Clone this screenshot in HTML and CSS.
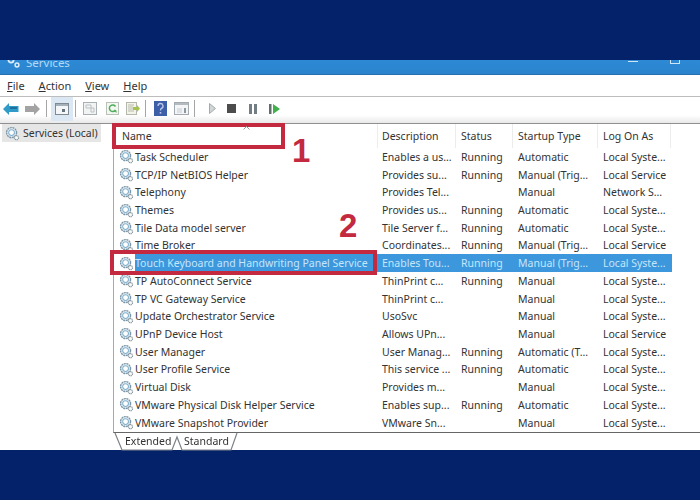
FILE: index.html
```html
<!DOCTYPE html>
<html lang="en">
<head>
<meta charset="utf-8">
<title>Services</title>
<link rel="stylesheet" href="styles.css">
</head>
<body>
<svg class="defs" width="0" height="0" aria-hidden="true">
  <symbol id="gear" viewBox="0 0 16 16">
    <circle cx="7" cy="7" r="5.300" fill="#f1f6f9" stroke="#7d97a8" stroke-width="1.500" stroke-dasharray="2.200 .6"/>
    <circle cx="7" cy="7" r="3.100" fill="#fff" stroke="#7fb0cf" stroke-width="1.100"/>
    <circle cx="12.200" cy="12.500" r="2.300" fill="#eef2f3" stroke="#84949c" stroke-width="1.100" stroke-dasharray="1.300 .5"/>
    <circle cx="12.200" cy="12.500" r=".8" fill="#fff"/>
  </symbol>
</svg>
<main class="window">
  <header class="titlebar">
    <svg class="title-icon" width="13" height="12" viewBox="0 0 13 12"><circle cx="4" cy="3" r="2.600" fill="none" stroke="#dcecf8" stroke-width="1.800"/><circle cx="10" cy="8" r="1.900" fill="none" stroke="#dcecf8" stroke-width="1.500"/></svg>
    <span class="title-text">Services</span>
    <span class="win-min"></span>
    <span class="win-max"></span>
  </header>
  <nav class="menubar">
    <span><u>F</u>ile</span><span><u>A</u>ction</span><span><u>V</u>iew</span><span><u>H</u>elp</span>
  </nav>
  <div class="toolbar">
    <svg class="t-back" width="16" height="12" viewBox="0 0 16 12"><path d="M0 6 6 0v3h9.500v6H6v3z" fill="#2f9bc9"/><path d="M7 4h7v2H7z" fill="#1d6f9c"/></svg>
    <svg class="t-fwd" width="15" height="12" viewBox="0 0 15 12"><path d="M15 6 9 0v3H0v6h9v3z" fill="#a3a3a3"/></svg>
    <i class="sep s1"></i>
    <span class="t-active"><svg width="14" height="12" viewBox="0 0 14 12"><rect x=".5" y=".5" width="13" height="11" fill="#f4f6f8" stroke="#7e8a94"/><path d="M1 1h12v2H1z" fill="#a4b0ba"/><path d="M7 6h3v3H7z" fill="#66727c"/></svg></span>
    <i class="sep s2"></i>
    <svg class="t-a" width="14" height="13" viewBox="0 0 14 13"><rect x=".5" y=".5" width="13" height="12" fill="#f2f3f3" stroke="#a9b0b4"/><path d="M3 3h5v3H3zM8 6h3v4H8z" fill="none" stroke="#bcc1c4"/></svg>
    <svg class="t-b" width="13" height="13" viewBox="0 0 13 13"><rect x=".5" y=".5" width="12" height="12" fill="#f3f6f1" stroke="#b9c2b6"/><path d="M9.500 8A3.300 3.300 0 1 1 9.500 4.500" fill="none" stroke="#4fae5b" stroke-width="1.500"/><path d="M7.500 8.500h3v2.500z" fill="#4fae5b"/></svg>
    <svg class="t-c" width="14" height="13" viewBox="0 0 14 13"><rect x=".5" y=".5" width="10" height="12" fill="#f3f3e9" stroke="#b4b8ab"/><path d="M2 3h6M2 5h5M2 7h5M2 9h6" stroke="#b7bbad"/><path d="M7 5h4V3l3 3.500L11 10V8H7z" fill="#a5c24d"/></svg>
    <i class="sep s3"></i>
    <svg class="t-help" width="13" height="15" viewBox="0 0 13 15"><rect width="13" height="15" fill="#3d5fa8"/><path d="M4 5a2.500 2.500 0 1 1 3.500 2.300C6.700 7.800 6.500 8.200 6.500 9.500" fill="none" stroke="#b9c8ea" stroke-width="1.400"/><rect x="5.700" y="11" width="1.600" height="1.600" fill="#b9c8ea"/></svg>
    <svg class="t-d" width="15" height="13" viewBox="0 0 15 13"><rect x=".5" y=".5" width="14" height="12" fill="#f4f5f6" stroke="#a3abb1"/><path d="M1 1h13v2H1z" fill="#b3bbc1"/><path d="M3 6h5v5H3z" fill="#dde1e5"/><path d="M10 6h2v5h-2z" fill="#8e98a0"/></svg>
    <i class="sep s4"></i>
    <svg class="t-play" width="7" height="11" viewBox="0 0 7 11"><path d="M.5.500 6.500 5.500.5 10.500z" fill="#cfd6d5" stroke="#a3acab"/></svg>
    <span class="t-stop"></span>
    <svg class="t-pause" width="8" height="10" viewBox="0 0 8 10"><path d="M0 0h3v10H0zM5 0h3v10H5z" fill="#727e84"/></svg>
    <svg class="t-resume" width="11" height="10" viewBox="0 0 11 10"><path d="M0 0h2.500v10H0z" fill="#5f6e68"/><path d="M4 0l7 5-7 5z" fill="#3fb04a"/></svg>
  </div>
  <div class="content">
    <aside class="tree">
      <div class="tree-item"><svg class="tree-icon" width="15" height="15"><use href="#gear"/></svg>Services (Local)</div>
    </aside>
    <section class="panel">
      <div class="list">
        <div class="row head"><span class="name-head">Name</span><span>Description</span><span>Status</span><span>Startup Type</span><span>Log On As</span></div>
        <div class="row"><span class="name"><svg class="gear" width="15" height="15"><use href="#gear"/></svg>Task Scheduler</span><span>Enables a us...</span><span>Running</span><span>Automatic</span><span>Local Syste...</span></div>
        <div class="row"><span class="name"><svg class="gear" width="15" height="15"><use href="#gear"/></svg>TCP/IP NetBIOS Helper</span><span>Provides su...</span><span>Running</span><span>Manual (Trig...</span><span>Local Service</span></div>
        <div class="row"><span class="name"><svg class="gear" width="15" height="15"><use href="#gear"/></svg>Telephony</span><span>Provides Tel...</span><span></span><span>Manual</span><span>Network S...</span></div>
        <div class="row"><span class="name"><svg class="gear" width="15" height="15"><use href="#gear"/></svg>Themes</span><span>Provides us...</span><span>Running</span><span>Automatic</span><span>Local Syste...</span></div>
        <div class="row"><span class="name"><svg class="gear" width="15" height="15"><use href="#gear"/></svg>Tile Data model server</span><span>Tile Server f...</span><span>Running</span><span>Automatic</span><span>Local Syste...</span></div>
        <div class="row"><span class="name"><svg class="gear" width="15" height="15"><use href="#gear"/></svg>Time Broker</span><span>Coordinates...</span><span>Running</span><span>Manual (Trig...</span><span>Local Service</span></div>
        <div class="row selected"><span class="name"><svg class="gear" width="15" height="15"><use href="#gear"/></svg><b>Touch Keyboard and Handwriting Panel Service</b></span><span>Enables Tou...</span><span>Running</span><span>Manual (Trig...</span><span>Local Syste...</span></div>
        <div class="row"><span class="name"><svg class="gear" width="15" height="15"><use href="#gear"/></svg>TP AutoConnect Service</span><span>ThinPrint c...</span><span>Running</span><span>Manual</span><span>Local Syste...</span></div>
        <div class="row"><span class="name"><svg class="gear" width="15" height="15"><use href="#gear"/></svg>TP VC Gateway Service</span><span>ThinPrint c...</span><span></span><span>Manual</span><span>Local Syste...</span></div>
        <div class="row"><span class="name"><svg class="gear" width="15" height="15"><use href="#gear"/></svg>Update Orchestrator Service</span><span>UsoSvc</span><span></span><span>Manual</span><span>Local Syste...</span></div>
        <div class="row"><span class="name"><svg class="gear" width="15" height="15"><use href="#gear"/></svg>UPnP Device Host</span><span>Allows UPn...</span><span></span><span>Manual</span><span>Local Service</span></div>
        <div class="row"><span class="name"><svg class="gear" width="15" height="15"><use href="#gear"/></svg>User Manager</span><span>User Manag...</span><span>Running</span><span>Automatic (T...</span><span>Local Syste...</span></div>
        <div class="row"><span class="name"><svg class="gear" width="15" height="15"><use href="#gear"/></svg>User Profile Service</span><span>This service ...</span><span>Running</span><span>Automatic</span><span>Local Syste...</span></div>
        <div class="row"><span class="name"><svg class="gear" width="15" height="15"><use href="#gear"/></svg>Virtual Disk</span><span>Provides m...</span><span></span><span>Manual</span><span>Local Syste...</span></div>
        <div class="row"><span class="name"><svg class="gear" width="15" height="15"><use href="#gear"/></svg>VMware Physical Disk Helper Service</span><span>Enables sup...</span><span>Running</span><span>Automatic</span><span>Local Syste...</span></div>
        <div class="row"><span class="name"><svg class="gear" width="15" height="15"><use href="#gear"/></svg>VMware Snapshot Provider</span><span>VMware Sn...</span><span></span><span>Manual</span><span>Local Syste...</span></div>
      </div>
      <div class="tabs">
        <svg class="tab-shape" width="130" height="19" viewBox="0 0 130 19"><path d="M1 0l7 17h50l5-13 5 13h49l6-17" fill="none" stroke="#7d8286" stroke-width="1.200"/></svg>
        <span class="tab-ext">Extended</span><span class="tab-std">Standard</span>
      </div>
      <div class="mark box-name"></div>
      <div class="mark box-row"></div>
      <span class="num num-1">1</span>
      <span class="num num-2">2</span>
      <svg class="sort" width="7" height="4" viewBox="0 0 7 4"><path d="M.5 3.500 3.500.5 6.500 3.500" fill="none" stroke="#9a9a9a"/></svg>
    </section>
  </div>
</main>
</body>
</html>
```
FILE: styles.css
```css
* { box-sizing: border-box; }
html, body { margin: 0; height: 100%; }
body {
  background: #04226a;
  padding-top: 60px;
  font-family: "Noto Sans", "Open Sans", sans-serif;
  font-size: 10.5px;
  color: #333;
  overflow: hidden;
}
.defs { position: absolute; }
.window {
  height: 390px;
  background: #fff;
  display: flex;
  flex-direction: column;
  filter: blur(0.45px);
}
.titlebar {
  height: 15px;
  flex: none;
  background: linear-gradient(#2e8ad6, #2a83cc);
  border-bottom: 1px solid #256fae;
  display: flex;
  align-items: flex-start;
  overflow: hidden;
  padding-left: 7px;
  color: #b4d9f5;
  font-size: 11.5px;
  line-height: 15px;
}
.title-icon { margin-top: -3px; flex: none; }
.title-text { margin: -5px 0 0 6px; }
.win-min { margin-left: auto; margin-top: 1px; width: 10px; height: 1px; background: #cfe4f5; }
.win-max { margin: -2px 20px 0 32px; width: 10px; height: 6px; border: 1px solid #cfe4f5; border-top: 0; }
.menubar {
  height: 22px;
  flex: none;
  display: flex;
  align-items: center;
  gap: 14px;
  padding-left: 7px;
  font-size: 11px;
  border-bottom: 1px solid #bdbdbd;
}
.toolbar {
  height: 27px;
  flex: none;
  display: flex;
  align-items: center;
  background: linear-gradient(#fff 70%, #e9e9e9);
  border-bottom: 1px solid #8f8f8f;
  padding: 0 0 3px 3px;
}
.sep { width: 1px; height: 17px; background: #a6a6a6; flex: none; }
.t-fwd { margin-left: 6px; }
.s1 { margin-left: 6px; }
.t-active {
  margin-left: 4px;
  width: 22px;
  height: 24px;
  background: #dbe8f3;
  display: flex;
  align-items: center;
  justify-content: center;
}
.s2 { margin-left: 2px; }
.t-a { margin-left: 7px; }
.t-b { margin-left: 9px; }
.t-c { margin-left: 7px; }
.s3 { margin-left: 5px; }
.t-help { margin-left: 8px; }
.t-d { margin-left: 7px; }
.s4 { margin-left: 5px; }
.t-play { margin-left: 14px; }
.t-stop { margin-left: 11px; width: 9px; height: 9px; background: #4c4c4c; }
.t-pause { margin-left: 13px; }
.t-resume { margin-left: 12px; }
.content { flex: 1; display: flex; min-height: 0; }
.tree { width: 110px; flex: none; padding: 0 0 0 2px; }
.tree-item {
  width: 99px;
  height: 18px;
  background: #e6e6e6;
  display: flex;
  align-items: center;
  gap: 3px;
  padding-left: 3px;
  white-space: nowrap;
}
.panel { position: relative; flex: 1; display: flex; flex-direction: column; padding-left: 3px; }
.list { flex: 1; border-left: 1px solid #a9a9a9; border-bottom: 1px solid #666; }
.row {
  display: grid;
  grid-template-columns: 264px 78px 57px 85px 73px;
  width: 558px;
  height: 17.73px;
  align-items: center;
  white-space: nowrap;
}
.row > span { padding-left: 4px; overflow: hidden; }
.row > span:nth-child(3), .row > span:nth-child(4), .row > span:nth-child(5) { padding-left: 5px; }
.head { height: 24px; }
.head > span { height: 24px; line-height: 24px; border-right: 1px solid #ececec; }
.head .name-head { padding-left: 8px; }
.name { display: flex; align-items: center; padding-left: 5px !important; gap: 1px; height: 17.73px; }
.gear { flex: none; }
.selected { color: #c5e6fb; background: linear-gradient(#fff, #fff) left/21px 100% no-repeat, #3d97dc; }
.selected b { font-weight: 400; }
.tabs { height: 18px; flex: none; position: relative; display: flex; padding: 0 0 0 12px; line-height: 16px; }
.tab-shape { position: absolute; left: 1px; top: 0; }
.tab-ext { width: 59px; position: relative; }
.tab-std { position: relative; }
.mark { position: absolute; border: 4px solid #c32a40; }
.box-name { left: 2px; top: -1px; width: 173px; height: 26px; }
.box-row { left: 0; top: 126px; width: 267px; height: 25px; }
.num { position: absolute; color: #c32a40; font: 700 33px/1 "Liberation Sans", sans-serif; }
.num-1 { left: 182px; top: 10px; }
.num-2 { left: 229px; top: 85px; }
.sort { position: absolute; left: 133px; top: 2px; }
```
